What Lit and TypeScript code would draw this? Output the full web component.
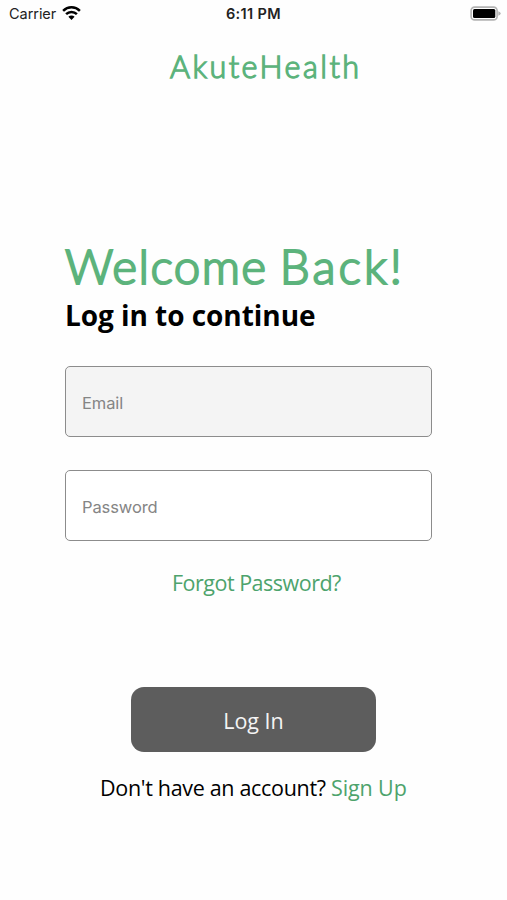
import { LitElement, html, css } from "lit";
import { customElement } from "lit/decorators.js";

@customElement("app-root")
export class AppRoot extends LitElement {
  static styles = css`
    :host {
      display: flex;
      flex-direction: column;
      box-sizing: border-box;
      width: 507px;
      height: 900px;
      background: #fefefe;
      color: #000;
      font-family: "Open Sans", "Noto Sans", sans-serif;
      overflow: hidden;
    }
    .status {
      display: grid;
      grid-template-columns: 1fr auto 1fr;
      align-items: center;
      height: 28px;
      padding: 0 6px 0 9px;
      font: 400 14.5px/28px Inter, sans-serif;
      color: #222;
    }
    .left { display: flex; align-items: center; gap: 6px; }
    .carrier { letter-spacing: -0.05px; }
    .wifi { display: block; width: 19px; height: 14px; margin-bottom: 2px; }
    .time { font-weight: 600; letter-spacing: 0.35px; margin-right: 3px; }
    .battery { display: block; justify-self: end; width: 31px; height: 15px; margin-bottom: 2px; }
    .display {
      font-family: Lato, sans-serif;
      font-weight: 300;
      color: #5cb37c;
      white-space: nowrap;
      margin: 0;
      stroke-linejoin: round;
    }
    .brand {
      font-size: 30.5px;
      line-height: 40px;
      letter-spacing: 2.5px;
      -webkit-text-stroke: 1.3px #5cb37c;
      margin: 18px 0 0 170px;
    }
    main { display: flex; flex-direction: column; padding: 153px 75px 0 65px; }
    .welcome {
      font-size: 47.5px;
      line-height: 54px;
      letter-spacing: 1.4px;
      word-spacing: -2px;
      -webkit-text-stroke: 2.1px #5cb37c;
    }
    .wide { letter-spacing: 3.1px; }
    .subtitle {
      margin: 2px 0 0;
      font-size: 28px;
      line-height: 40px;
      font-weight: 700;
      letter-spacing: -0.05px;
      white-space: nowrap;
    }
    .field {
      box-sizing: border-box;
      width: 367px;
      height: 71px;
      border: 1.5px solid #8c8c8c;
      border-radius: 5px;
      padding: 2px 16px 0;
      background: #fff;
      font: 400 16.5px Inter, sans-serif;
      letter-spacing: -0.1px;
      outline: none;
    }
    .field::placeholder { color: #858585; opacity: 1; }
    .email { margin-top: 31px; background: #f4f4f4; }
    .password { margin-top: 33px; }
    .link { color: #4da36c; }
    .forgot {
      margin: 27px 0 0 107px;
      font-size: 21.5px;
      line-height: 30px;
      letter-spacing: -0.5px;
      white-space: nowrap;
    }
    .login {
      display: block;
      width: 245px;
      height: 65px;
      margin: 89px 0 0 66px;
      padding: 2px 0 0;
      border: 0;
      border-radius: 13px;
      background: #5d5d5d;
      color: #f4f4f4;
      font: 400 21.5px "Open Sans", sans-serif;
    }
    .signup {
      margin: 20px 0 0 35px;
      font-size: 21.5px;
      line-height: 32px;
      letter-spacing: -0.32px;
      white-space: nowrap;
    }
    .signup .link { letter-spacing: -0.1px; }
  `;

  render() {
    return html`
      <div class="status">
        <div class="left">
          <span class="carrier">Carrier</span>
          <svg class="wifi" viewBox="0 0 19 14" fill="none" stroke="#000" stroke-width="2.5">
            <path d="M1.1 4.8a12 12 0 0 1 16.8 0" />
            <path d="M4.1 8.2a7.6 7.6 0 0 1 10.8 0" />
            <path d="M6.4 10.8a4.4 4.4 0 0 1 6.2 0l-3.1 3.2z" fill="#000" stroke="none" />
          </svg>
        </div>
        <span class="time">6:11 PM</span>
        <svg class="battery" viewBox="0 0 31 15">
          <rect x="1.1" y="1.1" width="26" height="12.8" rx="3.5" fill="#fff" stroke="#b3b3b3" stroke-width="1.6" />
          <rect x="3" y="3" width="22.3" height="9" rx="1.5" fill="#000" />
          <path d="M28.3 5.2q2.4 1 2.4 2.3t-2.4 2.3z" fill="#b3b3b3" />
        </svg>
      </div>
      <div class="display brand">AkuteHealth</div>
      <main>
        <h1 class="display welcome">Welcome <span class="wide">Back!</span></h1>
        <h2 class="subtitle">Log in to continue</h2>
        <input class="field email" type="email" placeholder="Email" />
        <input class="field password" type="password" placeholder="Password" />
        <span class="link forgot">Forgot Password?</span>
        <button class="login">Log In</button>
        <div class="signup">Don't have an account? <span class="link">Sign Up</span></div>
      </main>
    `;
  }
}
